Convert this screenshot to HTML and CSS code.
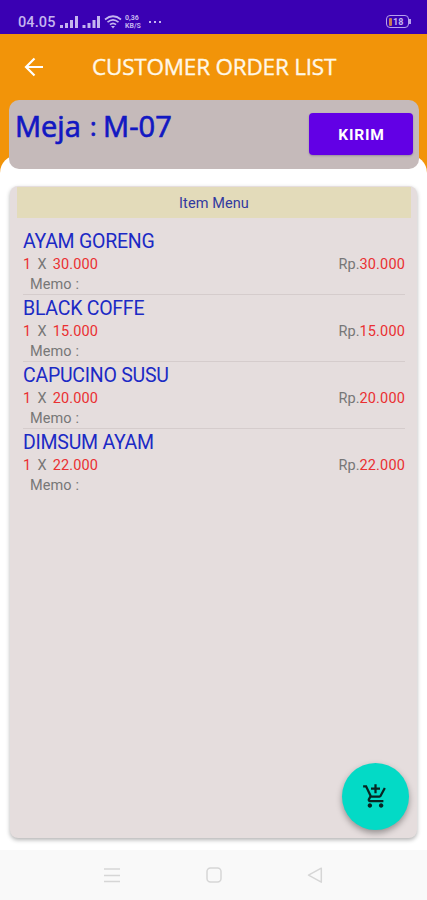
FILE: index.html
```html
<!DOCTYPE html>
<html lang="id">
<head>
<meta charset="utf-8">
<title>Customer Order List</title>
<link rel="stylesheet" href="styles.css">
</head>
<body>
<div class="screen">
  <header class="status">
    <span class="clock">04.05</span>
    <svg class="signals" width="41" height="14" viewBox="0 0 41 14" fill="#c5b5ef">
      <path d="M0 10h3v3H0zM5 8h3v5H5zM10 5h3v8h-3zM15 1h3v12h-3zM22.500 10h3v3h-3zM27.500 8h3v5h-3zM32.500 5h3v8h-3zM37 1h3v12h-3z"/>
    </svg>
    <svg class="wifi" width="18" height="14" viewBox="0 0 18 14" fill="none" stroke="#c5b5ef" stroke-width="1.700">
      <path d="M1 4.500Q9-2 17 4.500M3.500 7.200Q9 2.500 14.500 7.200M6 9.700Q9 7 12 9.700"/>
      <path d="M7 11h4l-2 2.500z" fill="#c5b5ef" stroke="none"/>
    </svg>
    <span class="speed"><span>0,36</span><span>KB/S</span></span>
    <span class="dots"><i></i><i></i><i></i></span>
    <span class="battery"><i></i><b>18</b></span>
  </header>
  <div class="appbar">
    <svg class="back" width="20" height="20" viewBox="0 0 20 20" fill="none" stroke="#fff" stroke-width="2.200">
      <path d="M19 10H2.500M10.500 1.500L2 10l8.500 8.500"/>
    </svg>
    <h1>CUSTOMER ORDER LIST</h1>
  </div>
  <main class="sheet">
    <section class="table-bar">
      <h2><span class="label">Meja</span><span class="colon">:</span><span class="number">M-07</span></h2>
      <button class="send">KIRIM</button>
    </section>
    <section class="card">
      <div class="card-title">Item Menu</div>
      <ul class="items">
        <li><h3>AYAM GORENG</h3><p class="price"><span><b>1</b> <i>X</i> <b>30.000</b></span><span>Rp.<b>30.000</b></span></p><p class="memo">Memo :</p></li>
        <li><h3>BLACK COFFE</h3><p class="price"><span><b>1</b> <i>X</i> <b>15.000</b></span><span>Rp.<b>15.000</b></span></p><p class="memo">Memo :</p></li>
        <li><h3>CAPUCINO SUSU</h3><p class="price"><span><b>1</b> <i>X</i> <b>20.000</b></span><span>Rp.<b>20.000</b></span></p><p class="memo">Memo :</p></li>
        <li><h3>DIMSUM AYAM</h3><p class="price"><span><b>1</b> <i>X</i> <b>22.000</b></span><span>Rp.<b>22.000</b></span></p><p class="memo">Memo :</p></li>
      </ul>
    </section>
  </main>
  <button class="fab" aria-label="Add">
    <svg width="27" height="27" viewBox="0 0 24 24" fill="#082522">
      <path d="M11 9h2V6h3V4h-3V1h-2v3H8v2h3v3zm-4 9c-1.100 0-1.990.900-1.990 2S5.900 22 7 22s2-.900 2-2-.900-2-2-2zm10 0c-1.100 0-1.990.900-1.990 2s.890 2 1.990 2 2-.900 2-2-.900-2-2-2zm-9.830-3.250l.030-.120.900-1.630h7.450c.750 0 1.410-.410 1.750-1.030l3.860-7.010L19.420 4h-.010l-1.100 2-2.760 5H8.530l-.130-.270L6.160 6l-.950-2-.940-2H1v2h2l3.600 7.590-1.350 2.450c-.160.280-.250.610-.250.960 0 1.100.900 2 2 2h12v-2H7.420c-.130 0-.250-.110-.250-.250z"/>
    </svg>
  </button>
  <nav class="nav">
    <svg width="16" height="16" viewBox="0 0 16 16"><path d="M0 2h16M0 8.500h16M0 14.500h16"/></svg>
    <svg width="16" height="16" viewBox="0 0 16 16"><rect x="1" y="1" width="14" height="14" rx="3.500"/></svg>
    <svg width="16" height="16" viewBox="0 0 16 16"><path d="M14.300 1.200v14L1.500 8.200z" stroke-linejoin="round"/></svg>
  </nav>
</div>
</body>
</html>
```
FILE: styles.css
```css
* { box-sizing: border-box; margin: 0; padding: 0; }
body { background: #fff; font-family: Roboto, sans-serif; }
button { border: 0; font-family: inherit; }
i { font-style: normal; }
.screen {
  position: relative;
  width: 427px;
  height: 900px;
  display: flex;
  flex-direction: column;
  overflow: hidden;
  background: #f29409;
}
.status {
  height: 34px;
  flex: none;
  display: flex;
  align-items: center;
  padding: 9px 17px 0 18px;
  background: #3a00b3;
  color: #c5b5ef;
}
.clock { width: 42px; padding-top: 1px; font-size: 14.500px; font-weight: 500; letter-spacing: .1px; }
.wifi { margin-left: 3px; }
.speed {
  display: flex;
  flex-direction: column;
  width: 18px;
  margin-left: 3px;
  font-size: 7px;
  line-height: 8px;
  font-weight: 700;
}
.dots { display: flex; gap: 3px; margin-left: 6px; }
.dots i { width: 2px; height: 2px; background: #c5b5ef; }
.battery {
  position: relative;
  width: 23px;
  height: 13px;
  margin-left: auto;
  margin-right: 1px;
  display: flex;
  align-items: center;
  gap: 1px;
  padding-left: 2px;
  border: 1.500px solid #b7a0ed;
  border-radius: 4px;
  font-size: 9px;
}
.battery i { width: 3px; height: 8px; background: #c87b56; border-radius: 1px; }
.battery::after {
  content: "";
  position: absolute;
  right: -3px;
  top: 3px;
  width: 2px;
  height: 5px;
  background: #b7a0ed;
}
.appbar {
  height: 66px;
  flex: none;
  display: flex;
  align-items: center;
  padding-left: 24px;
}
.appbar h1 {
  margin-left: 48px;
  padding-bottom: 2px;
  font: 400 22.500px "Open Sans", sans-serif;
  letter-spacing: -.2px;
  -webkit-text-stroke: .35px #fff8e8;
  color: #fff8e8;
  white-space: nowrap;
}
.sheet {
  flex: 1;
  display: flex;
  flex-direction: column;
  padding: 0 10px 12px;
  background: linear-gradient(#fff, #fff) 0 73px / 100% 100% no-repeat;
  position: relative;
}
.sheet::before {
  content: "";
  position: absolute;
  left: 0;
  right: 0;
  top: 55px;
  height: 40px;
  border-radius: 18px 18px 0 0;
  background: #fff;
}
.table-bar {
  position: relative;
  height: 69px;
  flex: none;
  margin: 0 -2px 0 -1px;
  display: flex;
  justify-content: space-between;
  padding: 13px 6px 13px 6px;
  border-radius: 10px;
  background: #c5baba;
}
.table-bar h2 {
  display: flex;
  height: 30px;
  align-items: center;
  margin-top: -2px;
  font: 400 29px/30px "Open Sans", sans-serif;
  -webkit-text-stroke: .7px #1118c2;
  color: #1118c2;
  white-space: nowrap;
}
.label { width: 75px; letter-spacing: 0; }
.colon { width: 13px; font-size: 25px; }
.number { letter-spacing: .1px; }
.send {
  width: 104px;
  height: 42px;
  border-radius: 4px;
  background: #6200e5;
  color: #fff;
  font-size: 15.500px;
  font-weight: 700;
  letter-spacing: .8px;
  padding: 2px 0 0 1px;
  box-shadow: 0 1px 2px rgba(50, 30, 90, .3);
}
.card {
  position: relative;
  flex: none;
  width: 407px;
  height: 652px;
  margin-top: 17px;
  padding: 1px 6px 0 7px;
  border-radius: 8px;
  background: #e5dddd;
  box-shadow: 0 2px 4px rgba(0, 0, 0, .3);
}
.card-title {
  height: 31px;
  padding-top: 1px;
  line-height: 31px;
  text-align: center;
  background: #e3dbba;
  color: #3139a0;
  font-size: 14.500px;
  letter-spacing: .1px;
}
.items { list-style: none; padding: 10px 6px 0; }
.items li { height: 67px; border-bottom: 1.500px solid #d5cccc; padding-top: 2px; }
.items li:last-child { border-bottom: 0; }
.items h3 {
  height: 23px;
  line-height: 24px;
  font-size: 19.500px;
  font-weight: 400;
  letter-spacing: -.25px;
  color: #1c2ac5;
  white-space: nowrap;
}
.price {
  display: flex;
  justify-content: space-between;
  height: 22px;
  line-height: 23px;
  font-size: 14.500px;
  color: #777;
}
.price b { font-weight: 400; color: #ea3032; letter-spacing: .15px; }
.price i { margin: 0 2.500px; }
.memo { padding-left: 7px; line-height: 20px; font-size: 14.500px; color: #777; letter-spacing: .1px; }
.fab {
  position: absolute;
  left: 342px;
  top: 763px;
  width: 67px;
  height: 67px;
  display: grid;
  place-items: center;
  border-radius: 50%;
  background: #03dac6;
  box-shadow: 0 3px 6px rgba(0, 0, 0, .35);
}
.nav {
  position: relative;
  height: 50px;
  flex: none;
  display: flex;
  justify-content: space-between;
  align-items: center;
  padding: 0 104px;
  background: #f9f9f9;
}
.nav svg { fill: none; stroke: #d6d6d6; stroke-width: 1.500; }
```
